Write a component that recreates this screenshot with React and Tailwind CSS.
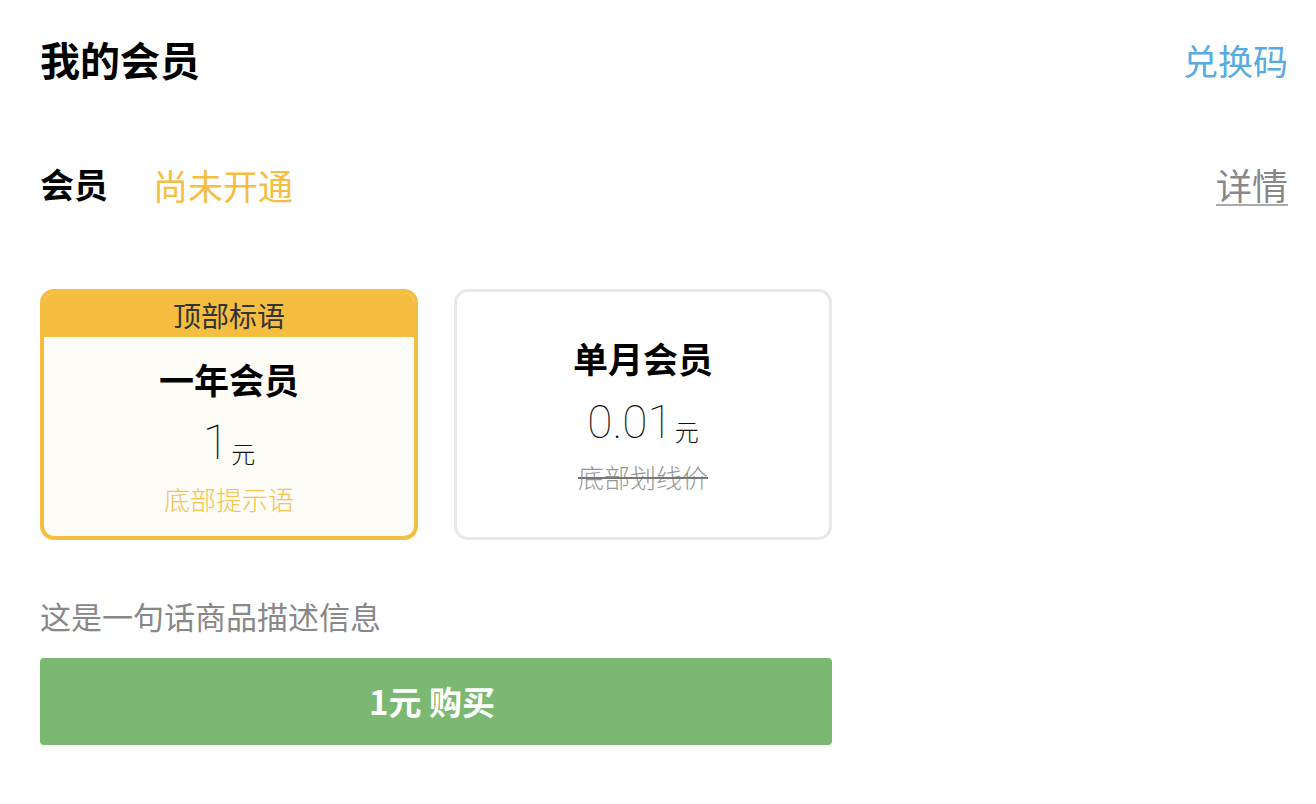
export default function App() {
  const cjk = { fontFamily: '"Noto Sans CJK SC", "Noto Sans", sans-serif' }
  const thin = { fontFamily: 'Roboto, "Noto Sans CJK SC", sans-serif' }

  return (
    <div className="w-[1316px] h-[804px] bg-white pl-[40px] pr-[28px]" style={cjk}>
      {/* Header */}
      <div className="flex items-center justify-between h-[118px]">
        <h1 className="text-[40px] font-bold text-black leading-none">我的会员</h1>
        <button className="text-[35px] text-[#58aae2] leading-none">兑换码</button>
      </div>

      {/* Status */}
      <div className="flex items-center justify-between h-[120px] mt-[6px]">
        <div className="flex items-center gap-[45px]">
          <span className="text-[34px] font-bold text-black leading-none">会员</span>
          <span className="text-[35px] text-[#f5bd41] leading-none">尚未开通</span>
        </div>
        <button className="text-[36px] text-[#888] leading-none underline underline-offset-[4px] decoration-[2px] decoration-[#aaa]">详情</button>
      </div>

      {/* Plans */}
      <div className="flex gap-[36px] mt-[45px] w-[792px]">
        <div className="w-[378px] h-[251px] border-[4px] border-[#f5be41] rounded-[14px] overflow-hidden bg-[#fdfcf7] flex flex-col">
          <div className="h-[44px] bg-[#f5be41] flex items-center justify-center text-[28px] text-[#333] leading-none">顶部标语</div>
          <div className="flex flex-col items-center pt-[24px]">
            <div className="text-[35px] font-bold text-black leading-none">一年会员</div>
            <div className="flex items-end mt-[23px] text-[#111] leading-none">
              <span className="text-[48px] font-thin" style={thin}>1</span>
              <span className="text-[24px] font-light ml-[2px] mb-[2px]" style={cjk}>元</span>
            </div>
            <div className="text-[26px] text-[#f5c24f] font-light leading-none mt-[19px]">底部提示语</div>
          </div>
        </div>

        <div className="w-[378px] h-[251px] border-[3px] border-[#e8e8e8] rounded-[14px] bg-white flex flex-col items-center pt-[48px]">
          <div className="text-[35px] font-bold text-black leading-none">单月会员</div>
          <div className="flex items-end mt-[24px] text-[#111] leading-none">
            <span className="text-[46px] font-thin" style={thin}>0.01</span>
            <span className="text-[24px] font-light ml-[2px] mb-[2px]" style={cjk}>元</span>
          </div>
          <div className="text-[26px] text-[#999] font-light leading-none mt-[19px] line-through decoration-[#777]">底部划线价</div>
        </div>
      </div>

      {/* Description */}
      <p className="text-[31px] text-[#888] leading-none mt-[60px]">这是一句话商品描述信息</p>

      {/* Buy */}
      <button className="mt-[27px] w-[792px] h-[87px] bg-[#7bb872] rounded-[4px] text-white text-[33px] font-bold leading-none flex items-center justify-center pr-[8px]">
        1元 购买
      </button>
    </div>
  )
}
